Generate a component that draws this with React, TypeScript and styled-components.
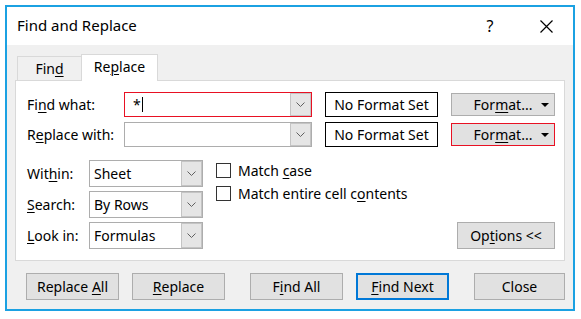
import React from 'react';
import styled, { createGlobalStyle } from 'styled-components';

const Global = createGlobalStyle`
  html, body { margin: 0; padding: 0; background: #fff; }
  body { font-family: "Noto Sans", "Open Sans", sans-serif; font-size: 14px; color: #000; }
  * { box-sizing: border-box; }
  u { text-decoration: underline; text-underline-offset: 2px; text-decoration-thickness: 1px; }
`;

const Window = styled.div`
  margin: 5px 0 0 5px;
  width: 570px;
  height: 306px;
  border: 2px solid #1ba1e2;
  display: flex;
  flex-direction: column;
  background: #f0f0f0;
`;

const TitleBar = styled.div`
  height: 38px;
  flex: none;
  background: #fff;
  display: flex;
  align-items: center;
  padding-left: 10px;
  padding-right: 4px;
`;

const Title = styled.div`
  flex: 1;
  font-size: 15px;
  line-height: 1;
  padding-bottom: 2px;
`;

const TitleButton = styled.div<{ $gap?: number }>`
  width: 46px;
  height: 30px;
  display: flex;
  align-items: center;
  justify-content: center;
  font-size: 16px;
  margin-left: ${p => p.$gap || 0}px;
`;

const Body = styled.div`
  flex: 1;
  display: flex;
  flex-direction: column;
  padding: 9px 8px 9px 8px;
`;

const TabStrip = styled.div`
  height: 26px;
  display: flex;
  align-items: flex-end;
  padding-left: 2px;
  position: relative;
  z-index: 1;
`;

const Tab = styled.div<{ $active?: boolean; $w: number }>`
  width: ${p => p.$w}px;
  height: ${p => (p.$active ? 27 : 24)}px;
  margin-bottom: ${p => (p.$active ? -1 : 0)}px;
  background: ${p => (p.$active ? '#fff' : '#f0f0f0')};
  border: 1px solid #d9d9d9;
  border-bottom: none;
  ${p => (p.$active ? '' : 'border-right: none;')}
  display: flex;
  align-items: center;
  justify-content: center;
  padding-bottom: ${p => (p.$active ? 3 : 0)}px;
  font-size: 14px;
`;

const Panel = styled.div`
  height: 181px;
  background: #fff;
  border: 1px solid #d9d9d9;
  padding: 11px 9px 11px 11px;
  display: flex;
  flex-direction: column;
`;

const TopGrid = styled.div`
  display: grid;
  grid-template-columns: 84px 188px 113px 104px;
  grid-auto-rows: 25px;
  column-gap: 13px;
  row-gap: 5px;
  align-items: center;
`;

const Label = styled.div`
  white-space: nowrap;
`;

const Combo = styled.div<{ $focus?: boolean }>`
  height: 100%;
  display: flex;
  border: 1px solid ${p => (p.$focus ? '#e81123' : '#adadad')};
  background: #fff;
`;

const ComboText = styled.div<{ $pad: number }>`
  flex: 1;
  display: flex;
  align-items: center;
  padding-left: ${p => p.$pad}px;
  white-space: nowrap;
`;

const Caret = styled.span`
  display: inline-block;
  width: 1px;
  height: 15px;
  background: #000;
  margin-left: 1px;
`;

const DropButton = styled.div`
  width: 21px;
  background: #e5e5e5;
  border: 1px solid #c4c4c4;
  display: flex;
  align-items: center;
  justify-content: center;
`;

const NoFormat = styled.div`
  height: 100%;
  border: 1.5px solid #000;
  display: flex;
  align-items: center;
  justify-content: center;
  white-space: nowrap;
`;

const FormatButton = styled.div<{ $focus?: boolean }>`
  height: 23px;
  border: 1px solid ${p => (p.$focus ? '#e81123' : '#adadad')};
  background: #e1e1e1;
  display: flex;
  align-items: center;
  padding: 0 5px 0 13px;
`;

const FormatLabel = styled.span`
  flex: 1;
  text-align: center;
`;

const Lower = styled.div`
  margin-top: 13px;
  display: flex;
  align-items: flex-start;
`;

const FieldGrid = styled.div`
  display: grid;
  grid-template-columns: 62px 114px;
  grid-auto-rows: 27px;
  row-gap: 4px;
  align-items: center;
`;

const Checks = styled.div`
  margin-left: 13px;
  margin-top: 3px;
  display: flex;
  flex-direction: column;
  gap: 8px;
`;

const CheckRow = styled.label`
  display: flex;
  align-items: center;
  gap: 7px;
  height: 15px;
  white-space: nowrap;
`;

const Box = styled.span`
  width: 15px;
  height: 15px;
  border: 1px solid #333;
  background: #fff;
  flex: none;
`;

const Button = styled.div<{ $w: number; $default?: boolean }>`
  width: ${p => p.$w}px;
  height: 27px;
  background: #e1e1e1;
  border: ${p => (p.$default ? '2px solid #0078d7' : '1px solid #adadad')};
  display: flex;
  align-items: center;
  justify-content: center;
  white-space: pre;
`;

const OptionsButton = styled(Button)`
  margin-left: auto;
  align-self: flex-end;
`;

const ButtonRow = styled.div`
  margin-top: 12px;
  padding-left: 11px;
  display: flex;
  gap: 25px;
`;

const ButtonPair = styled.div`
  display: flex;
  gap: 13px;
`;

const Chevron = () => (
  <svg width="9" height="5" viewBox="0 0 9 5">
    <path d="M0.5 0.5 L4.5 4.5 L8.5 0.5" fill="none" stroke="#606060" strokeWidth="1" />
  </svg>
);

const Triangle = () => (
  <svg width="8" height="4" viewBox="0 0 8 4">
    <path d="M0 0 L8 0 L4 4 Z" fill="#000" />
  </svg>
);

const CloseX = () => (
  <svg width="13" height="13" viewBox="0 0 13 13">
    <path d="M0.5 0.5 L12.5 12.5 M12.5 0.5 L0.5 12.5" stroke="#000" strokeWidth="1.2" />
  </svg>
);

export default function App() {
  return (
    <>
      <Global />
      <Window>
        <TitleBar>
          <Title>Find and Replace</Title>
          <TitleButton>?</TitleButton>
          <TitleButton $gap={10}>
            <CloseX />
          </TitleButton>
        </TitleBar>
        <Body>
          <TabStrip>
            <Tab $w={64}>
              <span>Fin<u>d</u></span>
            </Tab>
            <Tab $w={77} $active>
              <span>Re<u>p</u>lace</span>
            </Tab>
          </TabStrip>
          <Panel>
            <TopGrid>
              <Label>
                Fi<u>n</u>d what:
              </Label>
              <Combo $focus>
                <ComboText $pad={8}>
                  *<Caret />
                </ComboText>
                <DropButton>
                  <Chevron />
                </DropButton>
              </Combo>
              <NoFormat>No Format Set</NoFormat>
              <FormatButton>
                <FormatLabel>
                  For<u>m</u>at...
                </FormatLabel>
                <Triangle />
              </FormatButton>

              <Label>
                R<u>e</u>place with:
              </Label>
              <Combo>
                <ComboText $pad={8} />
                <DropButton>
                  <Chevron />
                </DropButton>
              </Combo>
              <NoFormat>No Format Set</NoFormat>
              <FormatButton $focus>
                <FormatLabel>
                  For<u>m</u>at...
                </FormatLabel>
                <Triangle />
              </FormatButton>
            </TopGrid>
            <Lower>
              <FieldGrid>
                <Label>
                  Wit<u>h</u>in:
                </Label>
                <Combo>
                  <ComboText $pad={4}>Sheet</ComboText>
                  <DropButton>
                    <Chevron />
                  </DropButton>
                </Combo>
                <Label>
                  <u>S</u>earch:
                </Label>
                <Combo>
                  <ComboText $pad={4}>By Rows</ComboText>
                  <DropButton>
                    <Chevron />
                  </DropButton>
                </Combo>
                <Label>
                  <u>L</u>ook in:
                </Label>
                <Combo>
                  <ComboText $pad={4}>Formulas</ComboText>
                  <DropButton>
                    <Chevron />
                  </DropButton>
                </Combo>
              </FieldGrid>
              <Checks>
                <CheckRow>
                  <Box />
                  <span>
                    Match <u>c</u>ase
                  </span>
                </CheckRow>
                <CheckRow>
                  <Box />
                  <span>
                    Match entire cell c<u>o</u>ntents
                  </span>
                </CheckRow>
              </Checks>
              <OptionsButton $w={98}>
                <span>Op<u>t</u>ions &lt;&lt;</span>
              </OptionsButton>
            </Lower>
          </Panel>
          <ButtonRow>
            <ButtonPair>
              <Button $w={93}>
                <span>Replace <u>A</u>ll</span>
              </Button>
              <Button $w={93}>
                <span><u>R</u>eplace</span>
              </Button>
            </ButtonPair>
            <ButtonPair>
              <Button $w={93}>
                <span>F<u>i</u>nd All</span>
              </Button>
              <Button $w={93} $default>
                <span><u>F</u>ind Next</span>
              </Button>
            </ButtonPair>
            <Button $w={93}>
              <span>Close</span>
            </Button>
          </ButtonRow>
        </Body>
      </Window>
    </>
  );
}
